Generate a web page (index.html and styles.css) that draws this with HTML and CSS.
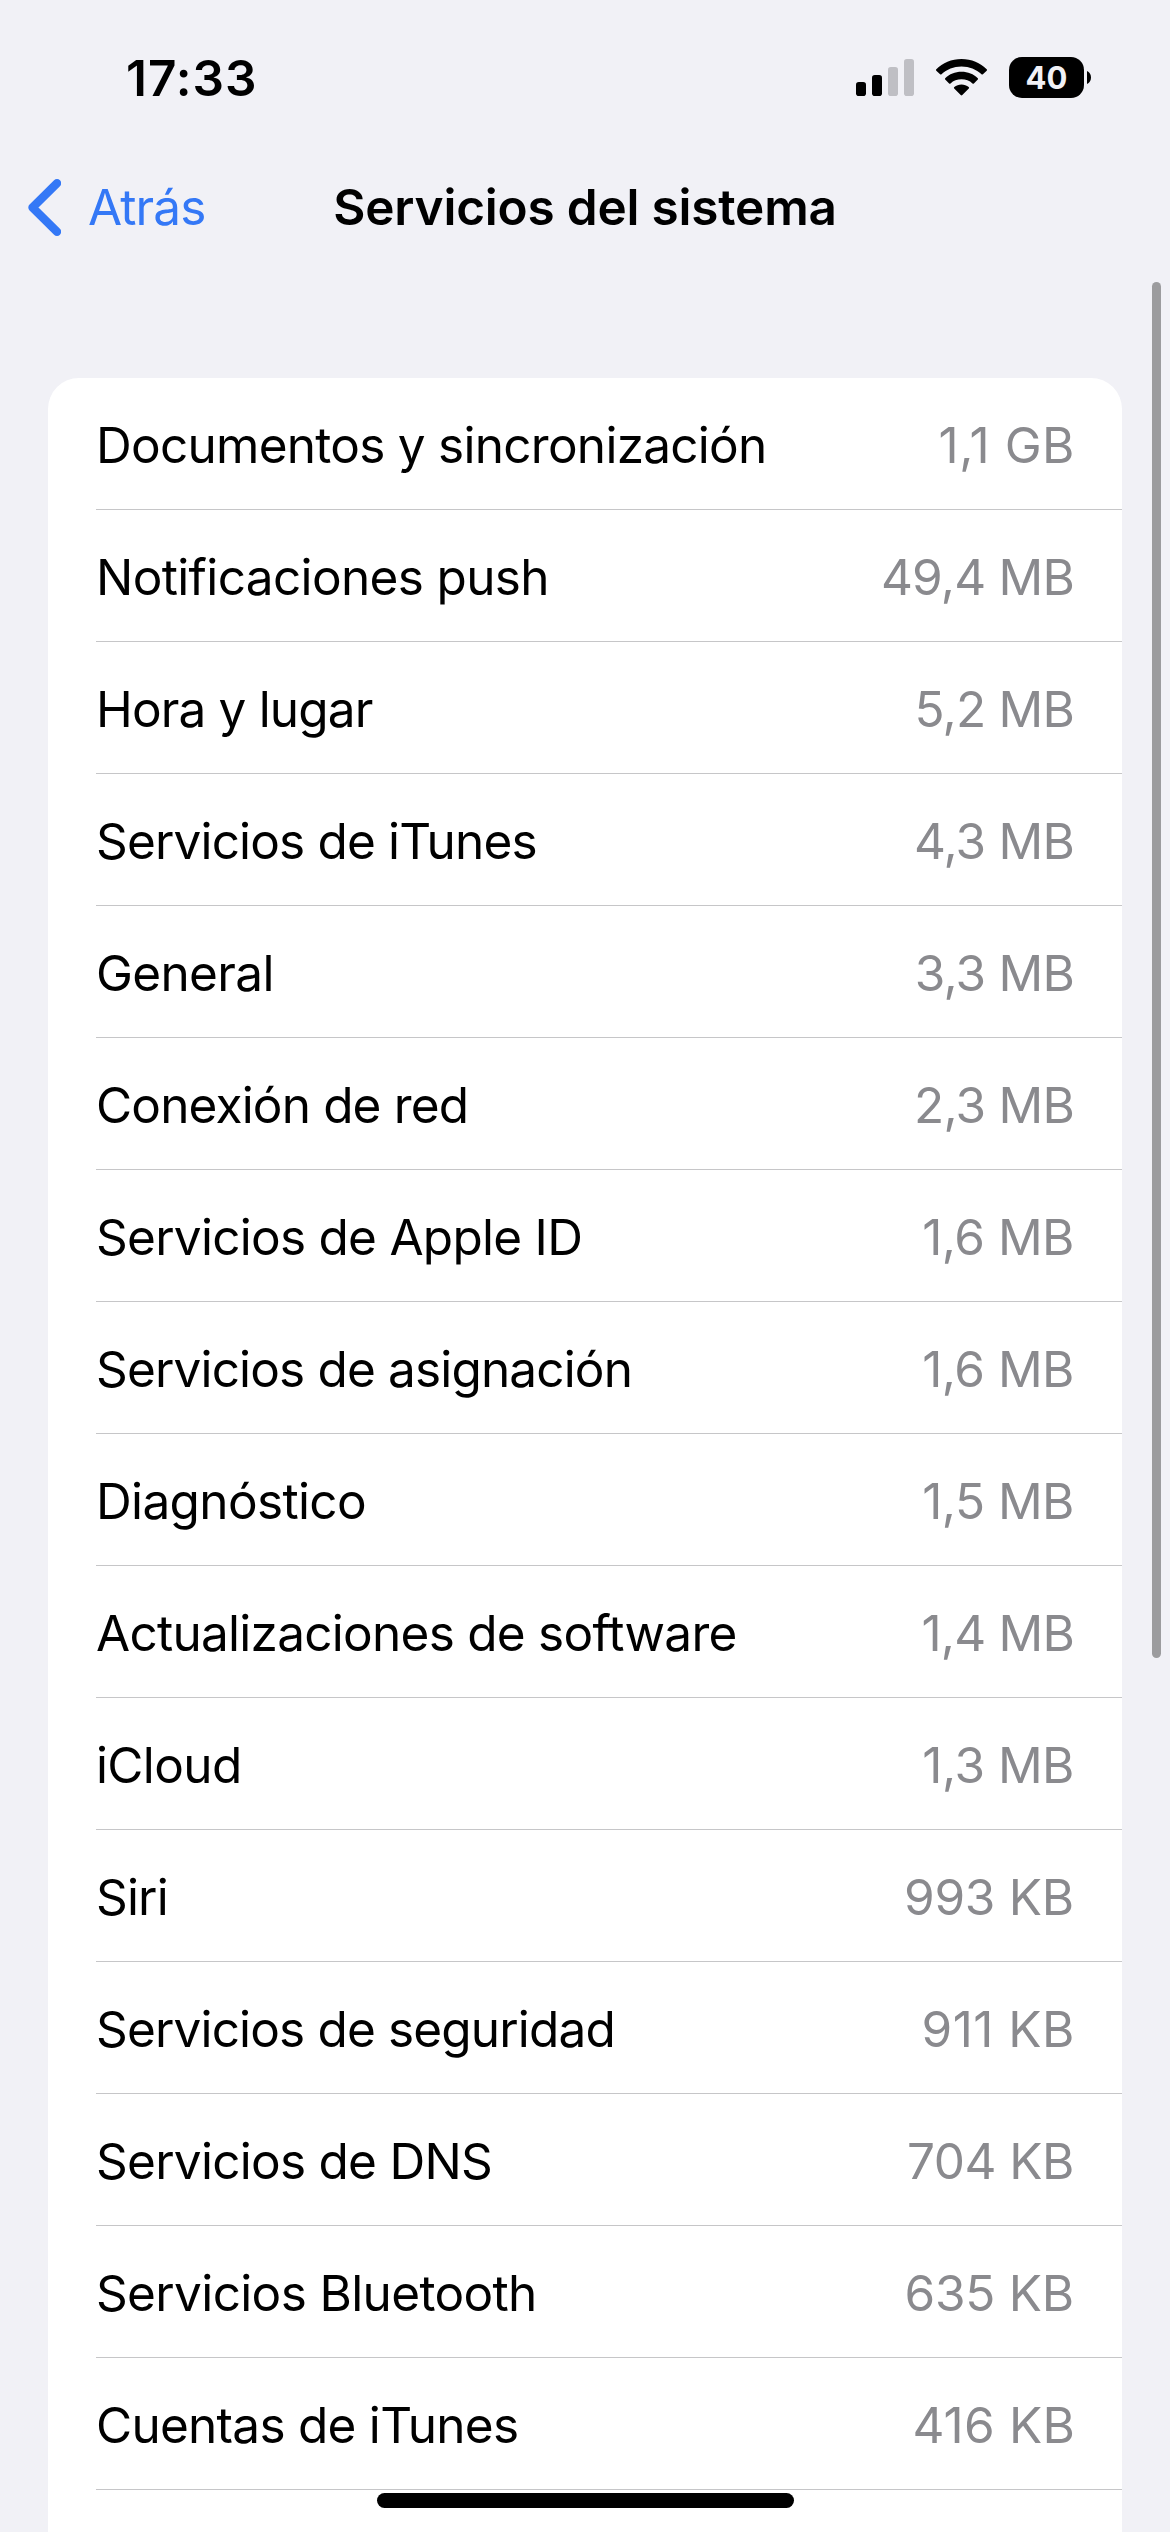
FILE: index.html
```html
<!DOCTYPE html>
<html lang="es">
<head>
<meta charset="utf-8">
<title>Servicios del sistema</title>
<link rel="stylesheet" href="styles.css">
</head>
<body>
<div class="screen">
  <header class="status-bar">
    <span class="time">17:33</span>
    <div class="status-icons">
      <svg class="signal" width="58" height="37" viewBox="0 0 58 37">
        <rect x="0" y="23" width="10" height="14" rx="2.8"/>
        <rect x="16" y="16" width="10" height="21" rx="2.8"/>
        <rect class="off" x="32" y="8" width="10" height="29" rx="2.8"/>
        <rect class="off" x="48" y="0" width="10" height="37" rx="2.8"/>
      </svg>
      <svg class="wifi" width="51" height="37" viewBox="0 0 51 37">
        <path d="M25.500 0C35.500 0 44.300 3.900 50.700 10.300Q51.300 11 50.700 11.700L46.900 15.200Q46.200 15.800 45.500 15.200C40.300 10.400 33.300 7.500 25.500 7.500S10.700 10.400 5.500 15.200Q4.800 15.800 4.100 15.200L.300 11.700Q-.300 11 .300 10.300C6.700 3.900 15.500 0 25.500 0Z"/>
        <path d="M25.500 12.800C31.900 12.800 37.600 15.200 41.800 19.200Q42.500 19.900 41.800 20.600L37.900 24.400Q37.200 25.100 36.500 24.400C33.600 21.800 29.700 20.300 25.500 20.300S17.400 21.800 14.500 24.400Q13.800 25.100 13.100 24.400L9.200 20.600Q8.500 19.900 9.200 19.200C13.400 15.200 19.100 12.800 25.500 12.800Z"/>
        <path d="M25.500 25.400C28.200 25.400 30.700 26.400 32.700 28.100Q33.500 28.800 32.800 29.500L26.300 36.100Q25.500 36.900 24.700 36.100L18.200 29.500Q17.500 28.800 18.300 28.100C20.300 26.400 22.800 25.400 25.500 25.400Z"/>
      </svg>
      <div class="battery">
        <span class="level">40</span>
        <svg class="nub" width="4" height="13" viewBox="0 0 4 13"><path d="M0 0C2.400 1 4 3.500 4 6.500S2.400 12 0 13Z"/></svg>
      </div>
    </div>
  </header>

  <nav class="nav-bar">
    <a class="back">
      <svg class="chevron" width="33" height="57" viewBox="0 0 33 57"><path d="M29 4.200L4.500 28.500L29 52.800"/></svg>
      <span>Atrás</span>
    </a>
    <h1 class="title">Servicios del sistema</h1>
  </nav>

  <main class="content">
    <ul class="list">
      <li class="row"><span class="name">Documentos y sincronización</span><span class="value wide">1,1 GB</span></li>
      <li class="row"><span class="name loose">Notificaciones push</span><span class="value">49,4 MB</span></li>
      <li class="row"><span class="name tight">Hora y lugar</span><span class="value">5,2 MB</span></li>
      <li class="row"><span class="name tight">Servicios de iTunes</span><span class="value">4,3 MB</span></li>
      <li class="row"><span class="name loose">General</span><span class="value">3,3 MB</span></li>
      <li class="row"><span class="name tight">Conexión de red</span><span class="value">2,3 MB</span></li>
      <li class="row"><span class="name">Servicios de Apple ID</span><span class="value medium">1,6 MB</span></li>
      <li class="row"><span class="name tight">Servicios de asignación</span><span class="value medium">1,6 MB</span></li>
      <li class="row"><span class="name loose">Diagnóstico</span><span class="value medium">1,5 MB</span></li>
      <li class="row"><span class="name">Actualizaciones de software</span><span class="value">1,4 MB</span></li>
      <li class="row"><span class="name loose">iCloud</span><span class="value medium">1,3 MB</span></li>
      <li class="row"><span class="name tight">Siri</span><span class="value loose">993 KB</span></li>
      <li class="row"><span class="name tight">Servicios de seguridad</span><span class="value wide">911 KB</span></li>
      <li class="row"><span class="name">Servicios de DNS</span><span class="value medium">704 KB</span></li>
      <li class="row"><span class="name loose">Servicios Bluetooth</span><span class="value loose">635 KB</span></li>
      <li class="row"><span class="name">Cuentas de iTunes</span><span class="value open">416 KB</span></li>
      <li class="row"></li>
    </ul>
  </main>

  <div class="scroll-thumb"></div>
  <div class="home-indicator"></div>
</div>
</body>
</html>
```

FILE: styles.css
```css
* { box-sizing: border-box; }

body {
  margin: 0;
  background: #f1f1f6;
  color: #000;
  font-family: Inter, "Liberation Sans", sans-serif;
  font-size: 49.5px;
  line-height: 60px;
}

.screen {
  position: relative;
  width: 1170px;
  height: 2532px;
  overflow: hidden;
  display: flex;
  flex-direction: column;
}

.status-bar {
  flex: none;
  height: 141px;
  padding: 48px 79px 0 126px;
  display: flex;
  justify-content: space-between;
  align-items: flex-start;
}

.time { font-weight: 600; letter-spacing: 1px; }

.status-icons {
  display: flex;
  align-items: center;
  height: 41px;
  margin-top: 9px;
}

.signal { margin-right: 22px; }
.signal .off { fill: #bfbfc4; }
.wifi { margin-right: 22px; }

.battery { display: flex; align-items: center; gap: 3px; }

.level {
  width: 75px;
  height: 41px;
  border-radius: 13px;
  background: #000;
  color: #f1f1f6;
  font-size: 31px;
  font-weight: 700;
  line-height: 42px;
  text-align: center;
}

.nav-bar {
  flex: none;
  height: 132px;
  display: grid;
  grid-template-columns: 1fr auto 1fr;
  align-items: center;
}

.back {
  display: flex;
  align-items: center;
  gap: 27px;
  padding-left: 28px;
  color: #3478f6;
  letter-spacing: -0.9px;
}

.chevron {
  fill: none;
  stroke: #3478f6;
  stroke-width: 8.4;
  stroke-linecap: round;
  stroke-linejoin: round;
}

.title {
  margin: 0;
  font-size: inherit;
  font-weight: 600;
  letter-spacing: -0.2px;
}

.content { padding: 105px 48px 0; }

.list {
  list-style: none;
  margin: 0;
  padding: 0;
  background: #fff;
  border-radius: 31px 31px 0 0;
}

.row {
  height: 132px;
  margin-left: 48px;
  padding: 2px 48px 0 0;
  border-bottom: 1px solid #c6c6c8;
  display: flex;
  justify-content: space-between;
  align-items: center;
}

.name { letter-spacing: -0.73px; }
.name.loose { letter-spacing: -0.64px; }
.name.tight { letter-spacing: -0.84px; }

.value { color: #8a8a8e; letter-spacing: -0.8px; }
.value.medium { letter-spacing: -0.5px; }
.value.loose { letter-spacing: -0.25px; }
.value.open { letter-spacing: 0.2px; margin-right: -1px; }
.value.wide { letter-spacing: 0.5px; margin-right: -1px; }

.scroll-thumb {
  position: absolute;
  left: 1152px;
  top: 282px;
  width: 9px;
  height: 1376px;
  border-radius: 5px;
  background: #9c9c9e;
}

.home-indicator {
  position: absolute;
  left: 377px;
  top: 2493px;
  width: 417px;
  height: 15px;
  border-radius: 8px;
  background: #000;
}
```
